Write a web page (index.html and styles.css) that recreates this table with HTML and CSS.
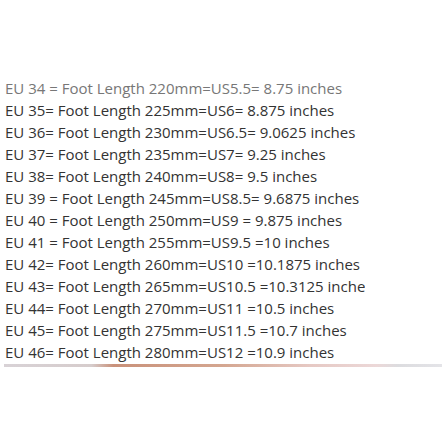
FILE: index.html
```html
<!DOCTYPE html>
<html lang="en">
<head>
    <meta charset="UTF-8">
    <title>Size Chart</title>
    <link rel="stylesheet" href="styles.css">
</head>
<body>

<div class="page">
    <!-- Size chart text block -->
    <div class="chart-window">
        <div class="chart">
            <p class="row faded">EU 34 = Foot Length 220mm=US5.5= 8.75 inches</p>
            <p class="row">EU 35= Foot Length 225mm=US6= 8.875 inches</p>
            <p class="row">EU 36= Foot Length 230mm=US6.5= 9.0625 inches</p>
            <p class="row">EU 37= Foot Length 235mm=US7= 9.25 inches</p>
            <p class="row">EU 38= Foot Length 240mm=US8= 9.5 inches</p>
            <p class="row">EU 39 = Foot Length 245mm=US8.5= 9.6875 inches</p>
            <p class="row">EU 40 = Foot Length 250mm=US9 = 9.875 inches</p>
            <p class="row">EU 41 = Foot Length 255mm=US9.5 =10 inches</p>
            <p class="row">EU 42= Foot Length 260mm=US10 =10.1875 inches</p>
            <p class="row">EU 43= Foot Length 265mm=US10.5 =10.3125 inches</p>
            <p class="row">EU 44= Foot Length 270mm=US11 =10.5 inches</p>
            <p class="row">EU 45= Foot Length 275mm=US11.5 =10.7 inches</p>
            <p class="row">EU 46= Foot Length 280mm=US12 =10.9 inches</p>
        </div>
    </div>
    <!-- Top edge of the product photo below -->
    <div class="photo-edge"></div>
</div>

</body>
</html>
```

FILE: styles.css
```css
body {
    margin: 0;
    padding: 0;
    background-color: #fff;
    font-family: 'Open Sans', 'Noto Sans', sans-serif;
    color: #333;
}
.page {
    padding-top: 77px;
}
.chart-window {
    width: 365px;
    height: 287px;
    overflow: hidden;
}
.chart {
    padding-left: 5px;
}
.row {
    margin: 0;
    font-size: 15px;
    line-height: 22px;
    white-space: nowrap;
}
.row.faded {
    color: #777;
}
/* Photo strip */
.photo-edge {
    margin-left: 4px;
    height: 3px;
    background: linear-gradient(to right, #d8d2d6 0%, #d6cccc 20%, #c9917a 25%, #d4a690 50%, #e6c9c4 70%, #ecd8d8 85%, #dcdcdf 90%, #e4e4e8 100%);
}
```
